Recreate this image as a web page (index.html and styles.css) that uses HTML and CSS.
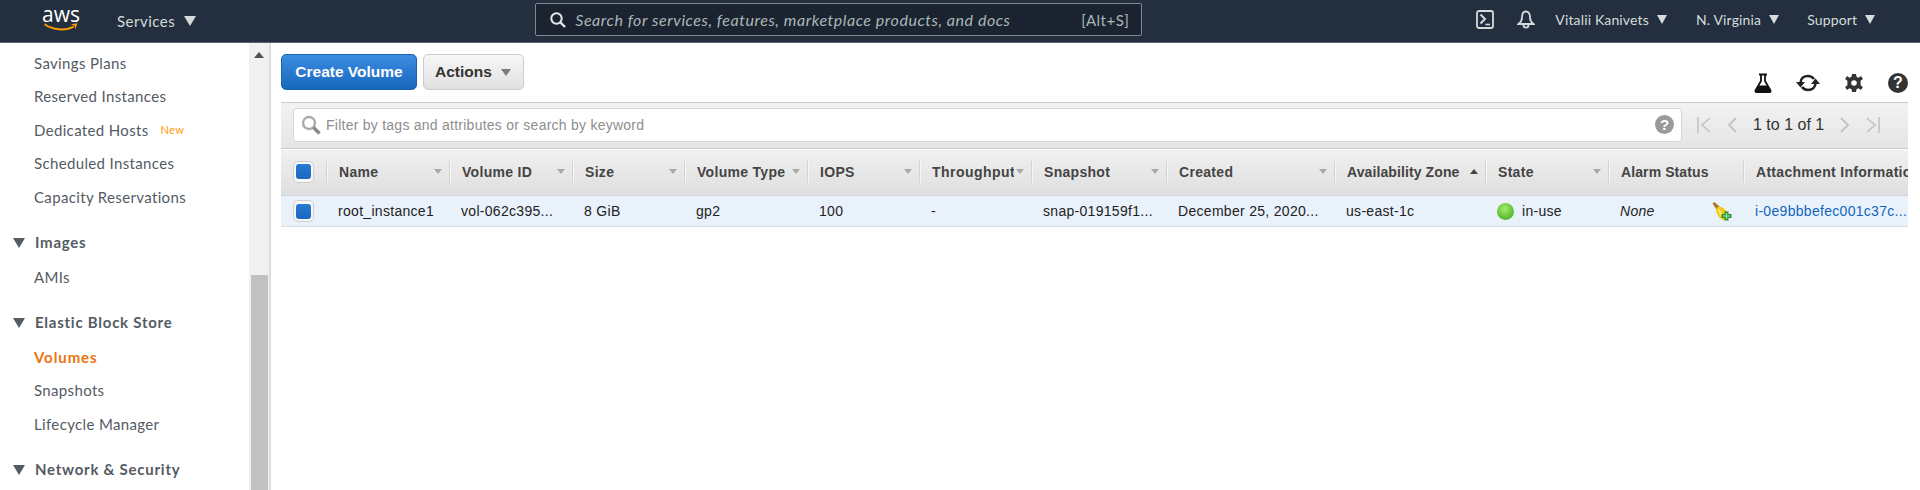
FILE: index.html
```html
<!DOCTYPE html>
<html>
  <head>
    <meta charset="UTF-8">
    <title>Volumes | EC2 Management Console</title>
    <link rel="stylesheet" href="styles.css">
  </head>
  <body>
    <header class="nav">
      <div class="logo">
        <span class="logo-word">aws</span>
        <svg class="logo-smile" width="38" height="11" viewBox="0 0 38 11">
          <path d="M1 2.5C10 9 24 10 33 5" fill="none" stroke="#f90" stroke-width="2.2"/>
          <path d="M30 2.5L37 1.5L35 8L34 4.5Z" fill="#f90"/>
        </svg>
      </div>
      <div class="nav-menu nav-services">Services<i class="nav-caret"></i></div>
      <div class="search">
        <svg width="18" height="18" viewBox="0 0 18 18">
          <circle cx="7.5" cy="7.5" r="5.2" fill="none" stroke="#e6e8ea" stroke-width="2"/>
          <path d="M11.5 11.5L16 16" stroke="#e6e8ea" stroke-width="2.4"/>
        </svg>
        <span class="search-text">Search for services, features, marketplace products, and docs</span>
        <span class="search-key">[Alt+S]</span>
      </div>
      <div class="nav-right">
        <svg class="nav-shell" width="18" height="19" viewBox="0 0 18 19">
          <rect x="1" y="1" width="16" height="17" rx="2" fill="none" stroke="#d5dbdb" stroke-width="1.8"/>
          <path d="M4.500 4.500L9 9L4.500 13.500" fill="none" stroke="#d5dbdb" stroke-width="2"/>
          <path d="M9.500 14.500H14" stroke="#d5dbdb" stroke-width="1.6"/>
        </svg>
        <svg class="nav-bell" width="18" height="19" viewBox="0 0 18 19">
          <path d="M9 1.500C5.500 1.500 5 5 5 7.500C5 10.500 3.500 12.500 1.500 14H16.500C14.500 12.500 13 10.500 13 7.500C13 5 12.500 1.500 9 1.500Z" fill="none" stroke="#d5dbdb" stroke-width="1.8"/>
          <path d="M6.500 15C6.500 18.500 11.500 18.500 11.500 15" fill="none" stroke="#d5dbdb" stroke-width="1.8"/>
        </svg>
        <div class="nav-menu nav-user">Vitalii Kanivets<i class="nav-caret"></i></div>
        <div class="nav-menu nav-region">N. Virginia<i class="nav-caret"></i></div>
        <div class="nav-menu nav-support">Support<i class="nav-caret"></i></div>
      </div>
    </header>

    <div class="main">
      <aside class="side">
        <a class="side-item">Savings Plans</a>
        <a class="side-item">Reserved Instances</a>
        <a class="side-item">Dedicated Hosts<span class="side-new">New</span></a>
        <a class="side-item">Scheduled Instances</a>
        <a class="side-item">Capacity Reservations</a>
        <div class="side-head">Images</div>
        <a class="side-item">AMIs</a>
        <div class="side-head">Elastic Block Store</div>
        <a class="side-item side-active">Volumes</a>
        <a class="side-item">Snapshots</a>
        <a class="side-item">Lifecycle Manager</a>
        <div class="side-head">Network &amp; Security</div>
      </aside>
      <div class="scroll">
        <i class="scroll-up"></i>
        <div class="scroll-thumb"></div>
      </div>

      <section class="content">
        <div class="toolbar">
          <button class="btn btn-primary">Create Volume</button>
          <button class="btn btn-actions">Actions<i class="btn-caret"></i></button>
          <div class="tools">
            <svg width="18" height="20" viewBox="0 0 18 20">
              <path d="M5 1.500H13" stroke="#111" stroke-width="2"/>
              <path d="M7 2V8L1.500 17.500C1.200 18.200 1.500 19 2.500 19H15.500C16.500 19 16.800 18.200 16.500 17.500L11 8V2" fill="none" stroke="#111" stroke-width="1.800"/>
              <path d="M4.500 12.500H13.500L16.500 18.500H1.500Z" fill="#111"/>
            </svg>
            <svg class="tool-refresh" width="24" height="20" viewBox="0 0 24 20">
              <path d="M4.500 10C4.500 5.500 8 3 12 3C14.500 3 16.500 4 18 6" fill="none" stroke="#222" stroke-width="2.600"/>
              <path d="M19.500 10C19.500 14.500 16 17 12 17C9.500 17 7.500 16 6 14" fill="none" stroke="#222" stroke-width="2.600"/>
              <path d="M0 9H9L4.500 14.500Z" fill="#222"/>
              <path d="M15 11H24L19.500 5.500Z" fill="#222"/>
            </svg>
            <svg class="tool-gear" width="18" height="18" viewBox="0 0 18 18">
              <path d="M7 0H11L11.500 2.800L13.600 3.700L16 2.100L17.900 5L15.600 6.800V11.200L17.900 13L16 15.900L13.600 14.300L11.500 15.200L11 18H7L6.500 15.200L4.400 14.300L2 15.900L.1 13L2.400 11.200V6.800L.1 5L2 2.100L4.400 3.700L6.500 2.800Z" fill="#333"/>
              <circle cx="9" cy="9" r="2.800" fill="#fff"/>
            </svg>
            <span class="tool-help">?</span>
          </div>
        </div>

        <div class="filter">
          <div class="filter-input">
            <svg width="21" height="20" viewBox="0 0 21 20">
              <circle cx="8" cy="8" r="6" fill="none" stroke="#aaa" stroke-width="2.400"/>
              <path d="M12.500 12.500L18.500 18.500" stroke="#888" stroke-width="3.400"/>
            </svg>
            <span class="filter-text">Filter by tags and attributes or search by keyword</span>
            <span class="filter-help">?</span>
          </div>
          <div class="pager">
            <svg width="14" height="18" viewBox="0 0 14 18"><path d="M1 1V17M13 2L5 9L13 16" fill="none" stroke="#c2c2c2" stroke-width="1.600"/></svg>
            <svg width="10" height="18" viewBox="0 0 10 18"><path d="M9 2L2 9L9 16" fill="none" stroke="#c2c2c2" stroke-width="1.800"/></svg>
            <span class="pager-text">1 to 1 of 1</span>
            <svg width="10" height="18" viewBox="0 0 10 18"><path d="M1 2L8 9L1 16" fill="none" stroke="#c2c2c2" stroke-width="1.800"/></svg>
            <svg width="14" height="18" viewBox="0 0 14 18"><path d="M13 1V17M1 2L9 9L1 16" fill="none" stroke="#c2c2c2" stroke-width="1.600"/></svg>
          </div>
        </div>

        <div class="grid grid-head">
          <div class="cell-check"><span class="check"><i></i></span></div>
          <div class="th"><span class="th-label">Name</span><i class="sort"></i></div>
          <div class="th"><span class="th-label">Volume ID</span><i class="sort"></i></div>
          <div class="th"><span class="th-label">Size</span><i class="sort"></i></div>
          <div class="th"><span class="th-label">Volume Type</span><i class="sort"></i></div>
          <div class="th"><span class="th-label">IOPS</span><i class="sort"></i></div>
          <div class="th"><span class="th-label th-wide">Throughput</span><i class="sort"></i></div>
          <div class="th"><span class="th-label">Snapshot</span><i class="sort"></i></div>
          <div class="th"><span class="th-label">Created</span><i class="sort"></i></div>
          <div class="th"><span class="th-label th-tight">Availability Zone</span><i class="sort sort-up"></i></div>
          <div class="th"><span class="th-label">State</span><i class="sort"></i></div>
          <div class="th"><span class="th-label th-tight">Alarm Status</span></div>
          <div class="th th-last"><span class="th-label">Attachment Information</span></div>
        </div>

        <div class="grid grid-row">
          <div class="cell-check"><span class="check"><i></i></span></div>
          <div class="td">root_instance1</div>
          <div class="td">vol-062c395...</div>
          <div class="td">8 GiB</div>
          <div class="td">gp2</div>
          <div class="td">100</div>
          <div class="td">-</div>
          <div class="td">snap-019159f1...</div>
          <div class="td">December 25, 2020...</div>
          <div class="td">us-east-1c</div>
          <div class="td td-state"><i class="dot"></i>in-use</div>
          <div class="td td-alarm">
            <em>None</em>
            <svg width="20" height="19" viewBox="0 0 20 19">
              <path d="M.5 1.500L2.500 0L8.500 5.500L5.500 9Z" fill="#a87c22"/>
              <path d="M5 5.500C8 3.500 12 6 14.500 9L16 17L12 18.500C8 17 5 13 4.500 10.500C4 8.500 4 7 5 5.500Z" fill="#f7c815"/>
              <path d="M6 7C8 7 10 10 11 16C8.500 14.500 6.500 11 6 7Z" fill="#ffe77a"/>
              <path d="M12.500 9.500H16.500V12H19.500V16H16.500V18.500H12.500V16H9.500V12H12.500Z" fill="#2c8f3a"/>
              <path d="M14.500 11V17M11 14H18" stroke="#7fdc7c" stroke-width="1.600"/>
            </svg>
          </div>
          <div class="td"><a class="link">i-0e9bbbefec001c37c...</a></div>
        </div>
      </section>
    </div>
  </body>
</html>
```

FILE: styles.css
```css
* {
  box-sizing: border-box;
}

html, body {
  height: 490px;
  margin: 0;
  overflow: hidden;
}

body {
  font-family: "Liberation Sans", Arial, sans-serif;
  font-size: 14px;
  background-color: white;
  color: #222;
}

i {
  display: block;
}

/* top bar */
.nav {
  display: flex;
  align-items: center;
  height: 43px;
  background-color: #232f3e;
  border-bottom: 1px solid #59626d;
  font-family: "Lato", sans-serif;
  color: #d5dbdb;
}

.logo {
  display: flex;
  flex-direction: column;
  width: 38px;
  height: 25px;
  margin-left: 42px;
  margin-top: -3px;
}

.logo-word {
  font-family: "Open Sans", sans-serif;
  font-size: 21px;
  line-height: 15px;
  letter-spacing: 0;
  color: white;
  text-align: center;
}

.nav-menu {
  display: flex;
  align-items: center;
  font-size: 14px;
  letter-spacing: .15px;
  white-space: nowrap;
}

.nav-services {
  margin-left: 37px;
  font-size: 15px;
  letter-spacing: .5px;
}

.nav-services .nav-caret {
  margin-left: 9px;
  border-left-width: 6px;
  border-right-width: 6px;
  border-top-width: 10px;
}

.nav-caret {
  width: 0;
  height: 0;
  margin-left: 8px;
  border-left: 5px solid transparent;
  border-right: 5px solid transparent;
  border-top: 9px solid #d5dbdb;
}

.search {
  display: flex;
  align-items: center;
  width: 607px;
  height: 33px;
  margin-left: 339px;
  margin-top: -3px;
  padding: 0 12px 0 13px;
  background-color: #1a232f;
  border: 1px solid #7e8791;
  border-radius: 2px;
}

.search-text {
  margin-left: 8px;
  font-size: 16px;
  font-style: italic;
  letter-spacing: .55px;
  color: #aab7b8;
}

.search-key {
  margin-left: auto;
  font-size: 15px;
  color: #aab7b8;
  letter-spacing: .5px;
}

.nav-right {
  display: flex;
  align-items: center;
  margin-left: 334px;
  margin-top: -3px;
}

.nav-bell {
  margin-left: 23px;
}

.nav-user {
  margin-left: 20px;
}

.nav-region {
  margin-left: 29px;
}

.nav-support {
  margin-left: 28px;
}

.main {
  display: flex;
  height: 447px;
}

/* left menu */
.side {
  flex: none;
  width: 249px;
  padding-top: 3px;
  font-family: "Lato", sans-serif;
  font-size: 15px;
  color: #545b64;
}

.side-item {
  display: flex;
  align-items: center;
  height: 33.5px;
  padding-left: 34px;
  letter-spacing: .35px;
}

.side-active {
  color: #ec7211;
  font-weight: 700;
  letter-spacing: .9px;
}

.side-new {
  margin-left: 12px;
  font-size: 11px;
  color: #ff9900;
}

.side-head {
  display: flex;
  align-items: center;
  height: 36.5px;
  margin-top: 10px;
  padding-left: 35px;
  position: relative;
  font-weight: 700;
  letter-spacing: .75px;
}

.side-head::before {
  content: "";
  position: absolute;
  left: 13px;
  top: 14px;
  border-left: 6px solid transparent;
  border-right: 6px solid transparent;
  border-top: 10px solid #545b64;
}

.scroll {
  flex: none;
  display: flex;
  flex-direction: column;
  align-items: center;
  width: 22px;
  padding-top: 9px;
  background-color: #f1f1f1;
  border-right: 2px solid #dcdcdc;
}

.scroll-up {
  border-left: 5px solid transparent;
  border-right: 5px solid transparent;
  border-bottom: 6px solid #505050;
}

.scroll-thumb {
  width: 17px;
  height: 215px;
  margin-top: 217px;
  background-color: #c1c1c1;
}

/* volumes list */
.content {
  flex: 1;
  min-width: 0;
  padding: 11px 12px 0 10px;
}

.toolbar {
  display: flex;
  height: 36px;
  margin-bottom: 12px;
}

.btn {
  display: flex;
  align-items: center;
  height: 36px;
  margin: 0;
  padding: 0;
  border-radius: 5px;
  font-family: inherit;
  font-size: 15.5px;
  font-weight: 700;
}

.btn-primary {
  justify-content: center;
  width: 136px;
  background: linear-gradient(#3c8ce2, #1767bd);
  border: 1px solid #1b62ad;
  color: white;
}

.btn-actions {
  width: 101px;
  margin-left: 6px;
  padding-left: 11px;
  background: linear-gradient(#f7f7f7, #e1e1e1);
  border: 1px solid #ccc;
  color: #333;
}

.btn-caret {
  margin-left: 9px;
  border-left: 5px solid transparent;
  border-right: 5px solid transparent;
  border-top: 7px solid #7c7c7c;
}

.tools {
  display: flex;
  align-items: center;
  margin-left: auto;
  margin-top: 19px;
  height: 20px;
}

.tool-refresh {
  margin-left: 24px;
}

.tool-gear {
  margin-left: 25px;
}

.tool-help {
  width: 20px;
  height: 20px;
  margin-left: 25px;
  border-radius: 50%;
  background-color: #333;
  color: white;
  font-size: 16px;
  font-weight: 700;
  line-height: 20px;
  text-align: center;
}

.filter {
  display: flex;
  align-items: center;
  height: 47px;
  padding-left: 12px;
  background: linear-gradient(#f2f2f2, #e5e5e5);
  border-top: 1px solid #c9c9c9;
  border-bottom: 1px solid #c9c9c9;
}

.filter-input {
  display: flex;
  align-items: center;
  width: 1389px;
  height: 34px;
  margin-top: -2px;
  padding: 0 7px;
  background-color: white;
  border: 1px solid #d5d5d5;
  border-radius: 4px;
}

.filter-text {
  margin-left: 4px;
  color: #8e8e8e;
  letter-spacing: .25px;
}

.filter-help {
  width: 19px;
  height: 19px;
  margin-left: auto;
  border-radius: 50%;
  background-color: #9a9a9a;
  color: white;
  font-size: 15px;
  font-weight: 700;
  line-height: 19px;
  text-align: center;
}

.pager {
  display: flex;
  align-items: center;
  gap: 16px;
  margin-left: 15px;
  margin-top: -2px;
}

.pager-text {
  font-size: 16px;
  color: #333;
}

.grid {
  display: grid;
  grid-template-columns: 45px 123px 123px 112px 123px 112px 112px 135px 168px 151px 123px 135px 165px;
}

.grid-head {
  height: 47px;
  padding-bottom: 2px;
  align-items: center;
  background: linear-gradient(#f0f0f0, #dfdfdf);
  border-top: 1px solid white;
  border-bottom: 1px solid #cfd4d9;
}

.grid-row {
  height: 31px;
  align-items: center;
  background-color: #e9f1fb;
  border-bottom: 1px solid #d6dde5;
}

.cell-check {
  padding-left: 12px;
}

.check {
  display: flex;
  align-items: center;
  justify-content: center;
  width: 21px;
  height: 22px;
  background-color: #f7f7f7;
  border: 1px solid #cfcfcf;
  border-radius: 5px;
}

.check i {
  width: 15px;
  height: 15px;
  background: linear-gradient(#2b7ad2, #1a68bf);
  border-radius: 3px;
}

.th {
  display: flex;
  align-items: center;
  height: 22px;
  padding: 0 7px 0 12px;
  overflow: hidden;
  border-left: 1px solid #d2d2d2;
  box-shadow: inset 1px 0 0 #f6f6f6;
  color: #444;
  font-weight: 700;
  letter-spacing: .3px;
  white-space: nowrap;
}

.th-label {
  flex: 1;
  min-width: 0;
  overflow: hidden;
}

/* the headings whose widths differ from the others in the console font */
.th-wide {
  letter-spacing: .45px;
}

.th-tight {
  letter-spacing: .1px;
}

.th-last {
  padding-right: 0;
}

.sort {
  flex: none;
  margin-left: 2px;
  border-left: 4.5px solid transparent;
  border-right: 4.5px solid transparent;
  border-top: 5px solid #a8a8a8;
}

.sort-up {
  border-top: 0;
  border-bottom: 5px solid #444;
}

.td {
  display: flex;
  align-items: center;
  height: 30px;
  padding-left: 12px;
  overflow: hidden;
  letter-spacing: .3px;
  white-space: nowrap;
}

.td-alarm em {
  flex: 1;
}

.td-alarm svg {
  margin-right: 11px;
}

.dot {
  flex: none;
  width: 17px;
  height: 17px;
  margin-right: 8px;
  border-radius: 50%;
  background: radial-gradient(circle at 45% 35%, #a6ec6c, #55b92e 70%, #3d9a22);
}

.link {
  color: #1166bb;
}
```
